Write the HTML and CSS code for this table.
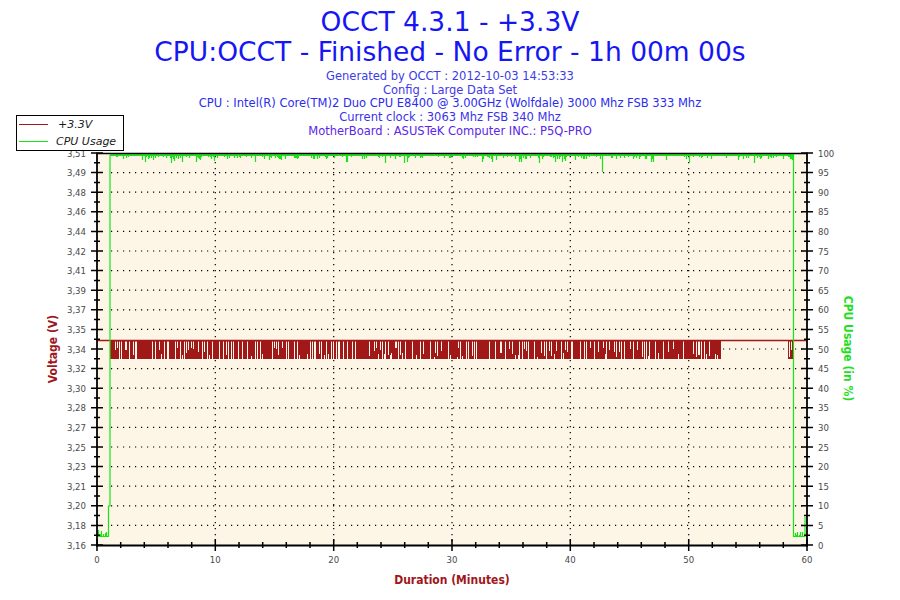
FILE: index.html
```html
<!DOCTYPE html>
<html>
<head>
<meta charset="utf-8">
<title>OCCT 4.3.1 - +3.3V</title>
<link rel="stylesheet" href="styles.css">
</head>
<body>
<div class="page">
  <header class="head">
    <h1 class="title">OCCT 4.3.1 - +3.3V</h1>
    <h1 class="title">CPU:OCCT - Finished - No Error - 1h 00m 00s</h1>
    <div class="info">
      <p class="info-line c1">Generated by OCCT : 2012-10-03 14:53:33</p>
      <p class="info-line c2">Config : Large Data Set</p>
      <p class="info-line c3">CPU : Intel(R) Core(TM)2 Duo CPU E8400 @ 3.00GHz (Wolfdale) 3000 Mhz FSB 333 Mhz</p>
      <p class="info-line c4">Current clock : 3063 Mhz FSB 340 Mhz</p>
      <p class="info-line c5">MotherBoard : ASUSTeK Computer INC.: P5Q-PRO</p>
    </div>
  </header>

  <div class="chart-wrap">
    <svg id="chart" class="chart" width="900" height="461" viewBox="0 139 900 461" xmlns="http://www.w3.org/2000/svg">
      <rect class="plot-bg" x="98" y="154" width="708" height="391"></rect>
      <g id="grid" class="grid"></g>
      <g id="volt"></g>
      <g id="cpu"></g>
      <g class="frame">
        <path class="frame-top" d="M97 153.5 H807"></path>
        <path class="frame-axis" d="M97 152.5 V546.5"></path>
        <path class="frame-axis" d="M807 152.5 V546.5"></path>
        <path class="frame-axis" d="M96 545.5 H808"></path>
      </g>
      <g id="ticks" class="ticks"></g>
      <g id="labels" class="tick-labels"></g>
      <text class="axis-title volt-title" transform="translate(56.5,349) rotate(-90)" text-anchor="middle">Voltage (V)</text>
      <text class="axis-title cpu-title" transform="translate(843.5,348.5) rotate(90)" text-anchor="middle">CPU Usage (in %)</text>
      <text class="axis-title dur-title" x="452" y="584" text-anchor="middle">Duration (Minutes)</text>
    </svg>
  </div>

  <div class="legend">
    <div class="legend-item">
      <span class="swatch swatch-volt"></span>
      <span class="legend-label lbl-volt">+3.3V</span>
    </div>
    <div class="legend-item">
      <span class="swatch swatch-cpu"></span>
      <span class="legend-label">CPU Usage</span>
    </div>
  </div>
</div>
<script src="chart.js"></script>
</body>
</html>
```

FILE: styles.css
```css
html, body {
  margin: 0;
  padding: 0;
  background: #ffffff;
}

.page {
  position: relative;
  width: 900px;
  height: 600px;
  overflow: hidden;
  font-family: "DejaVu Sans", sans-serif;
}

.head {
  display: flex;
  flex-direction: column;
  align-items: center;
  padding-top: 6.5px;
  height: 132.5px;
}

.title {
  margin: 0;
  font-size: 26.5px;
  line-height: 30px;
  font-weight: normal;
  color: #1616f4;
  white-space: nowrap;
}

.info {
  margin-top: 3.3px;
  display: flex;
  flex-direction: column;
  align-items: center;
}

.info-line {
  margin: 0;
  font-size: 11.5px;
  line-height: 13.7px;
  white-space: nowrap;
}

.c1 { color: #3c3ce6; }
.c2 { color: #4438e8; }
.c3 { color: #2c2cf0; }
.c4 { color: #3a32ea; }
.c5 { color: #5a26ea; }

.chart-wrap {
  width: 900px;
  height: 461px;
}

.chart {
  display: block;
}

.plot-bg { fill: #fdf5e6; }

.grid path {
  fill: none;
  stroke: #000000;
  stroke-width: 1.2;
  stroke-dasharray: 1.2 4.8;
}

.frame path {
  fill: none;
  stroke: #000000;
}
.frame-top { stroke-width: 1.5; }
.frame-axis { stroke-width: 1.8; }

.ticks path {
  fill: none;
  stroke: #000000;
  stroke-width: 1.5;
}

.tick-labels text {
  font-family: "DejaVu Sans Condensed", "DejaVu Sans", sans-serif;
  font-size: 9.5px;
  fill: #4a4a4a;
}

.vline {
  fill: none;
  stroke: #a01818;
  stroke-width: 1.6;
}
.vband { fill: #a01818; }
.vgap {
  fill: none;
  stroke: #fdf5e6;
  stroke-width: 1;
}

.cline {
  fill: none;
  stroke: #14e614;
  stroke-width: 1.2;
}
.ctop { fill: #14e614; }

.axis-title {
  font-family: "DejaVu Sans Condensed", "DejaVu Sans", sans-serif;
  font-size: 12px;
  font-weight: bold;
}
.volt-title { fill: #a0161c; }
.dur-title { fill: #a0161c; }
.cpu-title { fill: #1ee01e; }

.legend {
  position: absolute;
  left: 16px;
  top: 115px;
  width: 106px;
  height: 34px;
  border: 1px solid #000000;
  background: #ffffff;
  display: flex;
  flex-direction: column;
  justify-content: space-around;
  padding: 0;
}

.legend-item {
  display: flex;
  align-items: center;
  height: 17px;
}

.swatch {
  display: block;
  width: 29px;
  height: 1px;
  margin-left: 2px;
}
.swatch-volt { background: #a01818; }
.swatch-cpu { background: #14e614; }

.legend-label {
  margin-left: 8px;
  font-family: "DejaVu Sans", sans-serif;
  font-style: italic;
  font-size: 11px;
  color: #1a1a1a;
  white-space: nowrap;
}
.lbl-volt { margin-left: 10px; }
```

FILE: chart.js
```js
(function () {
  var NS = 'http://www.w3.org/2000/svg';
  function el(tag, attrs, parent, text) {
    var e = document.createElementNS(NS, tag);
    for (var k in attrs) e.setAttribute(k, attrs[k]);
    if (text !== undefined) e.textContent = text;
    parent.appendChild(e);
    return e;
  }
  var seed = 918273;
  function rnd() {
    seed = (seed * 1103515245 + 12345) % 2147483648;
    return seed / 2147483648;
  }

  var L = 97, R = 807, T = 153, B = 545;
  var step = (B - T) / 20;
  function X(t) { return L + t * (R - L) / 60; }

  // grid
  var grid = document.getElementById('grid');
  var gd = '';
  for (var i = 1; i < 20; i++) {
    var y = (T + i * step).toFixed(1);
    gd += 'M' + (L + 14) + ' ' + y + 'H' + (R - 2);
  }
  for (var t = 10; t < 60; t += 10) {
    var x = X(t).toFixed(1);
    gd += 'M' + x + ' ' + (T + 3) + 'V' + B;
  }
  el('path', { d: gd }, grid);

  // ticks
  var ticks = document.getElementById('ticks');
  var td = '';
  for (var j = 0; j <= 20; j++) {
    var yy = (T + j * step).toFixed(1);
    td += 'M' + (L - 6) + ' ' + yy + 'H' + (L + 6);
    td += 'M' + (R - 6) + ' ' + yy + 'H' + (R + 6);
    if (j < 20) {
      var ym = (T + j * step + step / 2).toFixed(1);
      td += 'M' + (L - 3) + ' ' + ym + 'H' + (L + 3);
      td += 'M' + (R - 3) + ' ' + ym + 'H' + (R + 3);
    }
  }
  for (var m = 0; m <= 60; m += 2) {
    var xm = X(m).toFixed(1);
    if (m % 10 === 0) td += 'M' + xm + ' ' + (B - 6) + 'V' + (B + 6);
    else td += 'M' + xm + ' ' + (B - 3) + 'V' + (B + 3);
  }
  el('path', { d: td }, ticks);

  // labels
  var labels = document.getElementById('labels');
  var left = ['3,51','3,49','3,48','3,46','3,44','3,42','3,41','3,39','3,37','3,35','3,34',
              '3,32','3,30','3,28','3,27','3,25','3,23','3,21','3,20','3,18','3,16'];
  for (var k = 0; k <= 20; k++) {
    var ly = (T + k * step + 3.5).toFixed(1);
    el('text', { x: 86, y: ly, 'text-anchor': 'end' }, labels, left[k]);
    el('text', { x: 818, y: ly, 'text-anchor': 'start' }, labels, String(100 - k * 5));
  }
  for (var n = 0; n <= 60; n += 10) {
    el('text', { x: X(n).toFixed(1), y: 563, 'text-anchor': 'middle' }, labels, String(n));
  }

  // voltage data
  var volt = document.getElementById('volt');
  el('path', { d: 'M97 340.5H807', 'class': 'vline' }, volt);
  el('rect', { x: 110, y: 340, width: 611, height: 19, 'class': 'vband' }, volt);
  el('rect', { x: 788, y: 340, width: 5, height: 19, 'class': 'vband' }, volt);
  var vd = '';
  for (var vx = 112; vx < 719; vx++) {
    var r = rnd();
    if (r < 0.32) {
      var bot = rnd() < 0.6 ? 359 : 348 + Math.floor(rnd() * 10);
      vd += 'M' + (vx + 0.5) + ' 341.6V' + bot;
      if (rnd() < 0.1) { vx++; vd += 'M' + (vx + 0.5) + ' 341.6V' + bot; }
      vx += 1;
    } else if (r < 0.38) {
      var top = 353 + Math.floor(rnd() * 5);
      vd += 'M' + (vx + 0.5) + ' ' + top + 'V359';
    }
  }
  vd += 'M789.5 341.6V357M791.5 341.6V350';
  el('path', { d: vd, 'class': 'vgap' }, volt);

  // cpu data
  var cpu = document.getElementById('cpu');
  el('rect', { x: 110, y: 154.2, width: 684, height: 1.8, 'class': 'ctop' }, cpu);
  var cd = 'M97 536.5H108.5V506H110V155M793.5 155V536.5H805V517';
  var lefts = [98.5, 100.5, 101.5, 103.5, 105.5, 106.5];
  for (var a = 0; a < lefts.length; a++) {
    cd += 'M' + lefts[a] + ' 537V' + (530 + Math.floor(rnd() * 5));
  }
  for (var px = 111; px < 792; px++) {
    var s = rnd();
    if (s < 0.28) {
      var len = s < 0.04 ? 4 + Math.floor(rnd() * 4) : 1 + Math.floor(rnd() * 3);
      cd += 'M' + (px + 0.5) + ' 155V' + (156 + len);
    }
  }
  cd += 'M602.5 155V172M791.5 155V159M792.5 155V160';
  for (var bx = 795; bx < 805; bx++) {
    if (rnd() < 0.6) cd += 'M' + (bx + 0.5) + ' 537V' + (532 + Math.floor(rnd() * 4));
  }
  el('path', { d: cd, 'class': 'cline' }, cpu);
})();
```
